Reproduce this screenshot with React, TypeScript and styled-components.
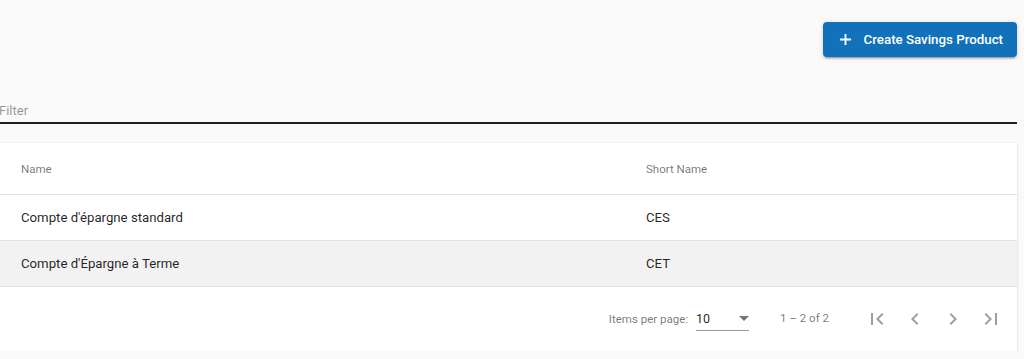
import React from 'react'
import styled, { createGlobalStyle } from 'styled-components'

const GlobalStyle = createGlobalStyle`
  html, body {
    margin: 0;
    padding: 0;
    background: #fafafa;
    font-family: Roboto, "Liberation Sans", Arial, sans-serif;
    overflow: hidden;
  }
`

const Page = styled.div`
  width: 1020px;
  margin-left: -3px;
  padding-top: 22px;
`

const Toolbar = styled.div`
  display: flex;
  justify-content: flex-end;
`

const PrimaryButton = styled.button`
  display: flex;
  align-items: center;
  gap: 12px;
  height: 35px;
  padding: 0 14px 0 16px;
  border: none;
  border-radius: 4px;
  background: #1172b9;
  color: #fff;
  font-family: Roboto, "Liberation Sans", Arial, sans-serif;
  font-size: 13.3px;
  font-weight: 500;
  box-shadow: 0 3px 1px -2px rgba(0,0,0,.2), 0 2px 2px 0 rgba(0,0,0,.14), 0 1px 5px 0 rgba(0,0,0,.12);
`

const FilterField = styled.div`
  margin-top: 41px;
  padding-left: 2px;
  height: 24px;
  display: flex;
  align-items: center;
  border-bottom: 2px solid #1f1f1f;
  color: rgba(0,0,0,.42);
  font-size: 13px;
`

const Card = styled.div`
  margin-top: 19px;
  background: #fff;
  box-shadow: 0 2px 1px -1px rgba(0,0,0,.2), 0 1px 1px 0 rgba(0,0,0,.14), 0 1px 3px 0 rgba(0,0,0,.12);
`

const Row = styled.div<{ $header?: boolean; $shaded?: boolean }>`
  display: grid;
  grid-template-columns: 625px 1fr;
  align-items: center;
  height: ${(p) => (p.$header ? 51 : 45)}px;
  padding-left: 24px;
  border-bottom: 1px solid #e2e2e2;
  background: ${(p) => (p.$shaded ? '#f2f2f2' : '#fff')};
  font-size: ${(p) => (p.$header ? 11.5 : 13.2)}px;
  color: ${(p) => (p.$header ? 'rgba(0,0,0,.54)' : 'rgba(0,0,0,.87)')};
`

const Paginator = styled.div`
  display: flex;
  align-items: center;
  justify-content: flex-end;
  height: 64px;
  padding-right: 14px;
  font-size: 11.5px;
  color: rgba(0,0,0,.54);
`

const PageSize = styled.div`
  display: flex;
  align-items: center;
  justify-content: space-between;
  width: 53px;
  margin-left: 8px;
  margin-top: 4px;
  padding-bottom: 4px;
  border-bottom: 1px solid rgba(0,0,0,.42);
  color: rgba(0,0,0,.87);
  font-size: 12.5px;
`

const Range = styled.div`
  margin: 0 36px 0 31px;
  padding-bottom: 2px;
`

const NavIcons = styled.div`
  display: flex;
  gap: 14px;
`

const NavButton = styled.span`
  width: 24px;
  height: 24px;
  display: flex;
  color: rgba(0,0,0,.38);
`

const Icon = ({ d }: { d: string }) => (
  <svg width="24" height="24" viewBox="0 0 24 24" fill="currentColor">
    <path d={d} />
  </svg>
)

const rows = [
  { name: "Compte d'épargne standard", short: 'CES' },
  { name: "Compte d'Épargne à Terme", short: 'CET' },
]

const App: React.FC = () => {
  return (
    <Page>
      <GlobalStyle />
      <Toolbar>
        <PrimaryButton>
          <svg width="13" height="13" viewBox="0 0 14 14">
            <path d="M7 1v12M1 7h12" stroke="#fff" strokeWidth="2" />
          </svg>
          Create Savings Product
        </PrimaryButton>
      </Toolbar>
      <FilterField>Filter</FilterField>
      <Card>
        <Row $header>
          <span>Name</span>
          <span>Short Name</span>
        </Row>
        {rows.map((r, i) => (
          <Row key={r.short} $shaded={i === 1}>
            <span>{r.name}</span>
            <span>{r.short}</span>
          </Row>
        ))}
        <Paginator>
          Items per page:
          <PageSize>
            10
            <svg width="10" height="5" viewBox="0 0 10 5">
              <path d="M0 0l5 5 5-5z" fill="rgba(0,0,0,.54)" />
            </svg>
          </PageSize>
          <Range>1 – 2 of 2</Range>
          <NavIcons>
            <NavButton><Icon d="M18.41 16.59L13.82 12l4.59-4.59L17 6l-6 6 6 6zM6 6h2v12H6z" /></NavButton>
            <NavButton><Icon d="M15.41 7.41L14 6l-6 6 6 6 1.41-1.41L10.83 12z" /></NavButton>
            <NavButton><Icon d="M10 6L8.59 7.41 13.17 12l-4.58 4.59L10 18l6-6z" /></NavButton>
            <NavButton><Icon d="M5.59 7.41L10.18 12l-4.59 4.59L7 18l6-6-6-6zM16 6h2v12h-2z" /></NavButton>
          </NavIcons>
        </Paginator>
      </Card>
    </Page>
  )
}

export default App
